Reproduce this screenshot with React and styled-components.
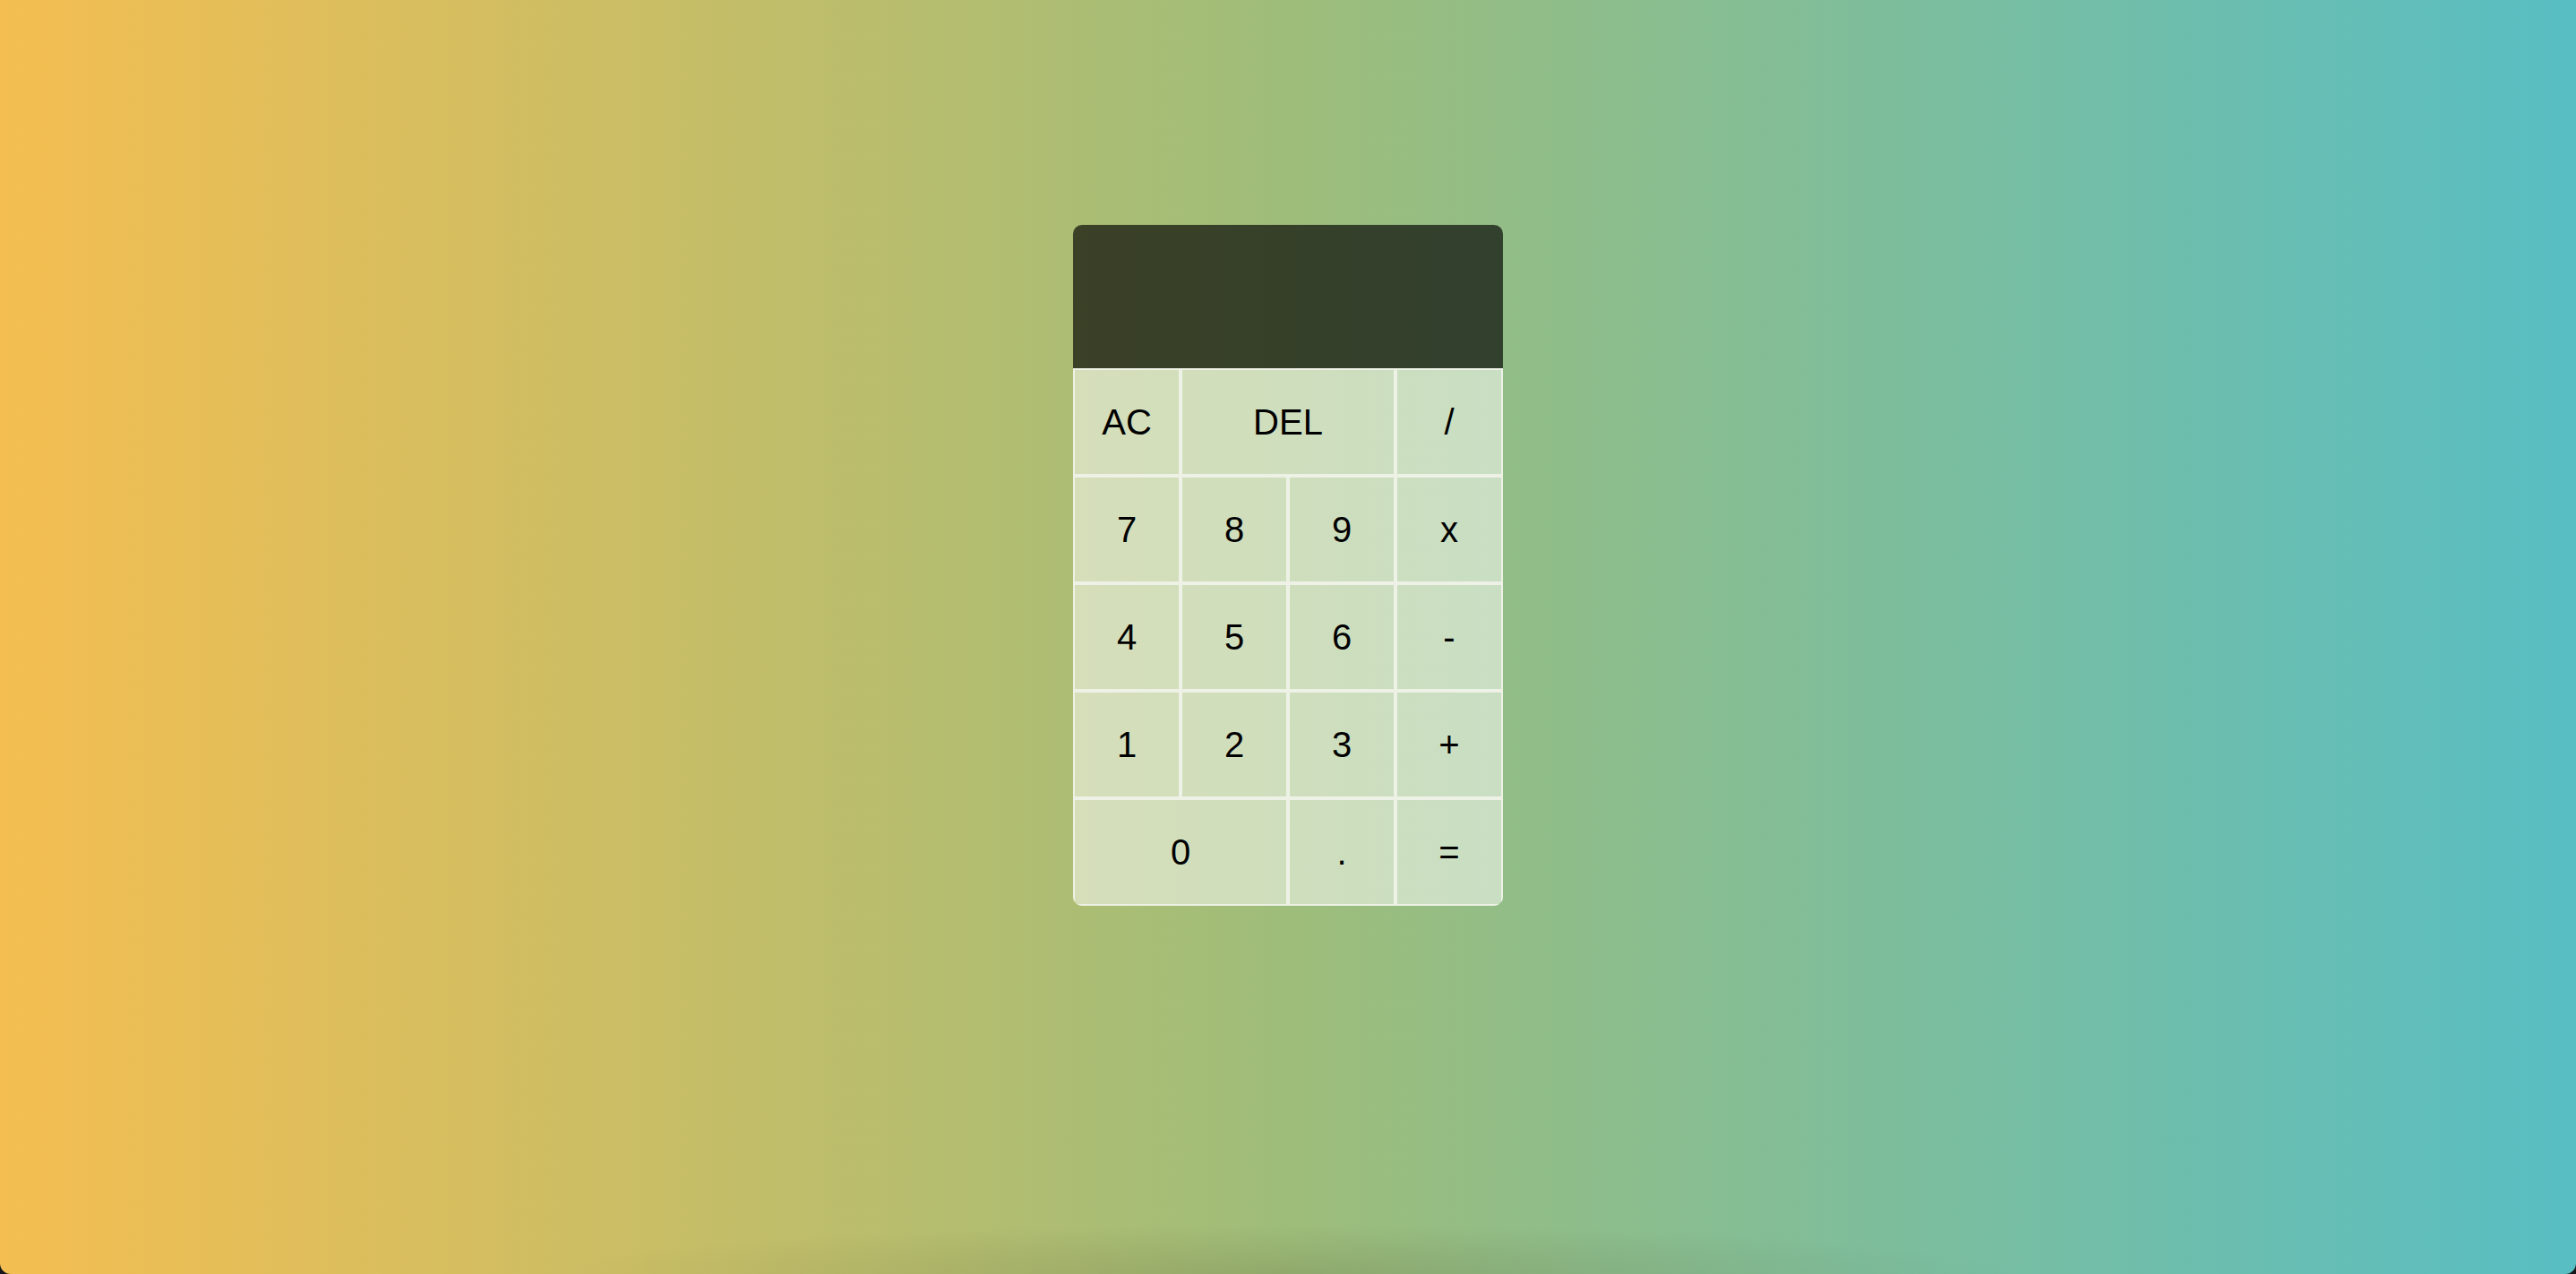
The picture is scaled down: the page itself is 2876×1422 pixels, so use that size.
import styled, { createGlobalStyle } from "styled-components";

const GlobalStyle = createGlobalStyle`
  *, *::before, *::after {
    box-sizing: border-box;
  }

  body {
    margin: 0;
    background: #15171a;
    font-family: "Liberation Sans", Arial, sans-serif;
  }
`;

const Page = styled.div`
  height: 100vh;
  padding-top: 251px;
  border-radius: 0 0 12px 12px;
  overflow: hidden;
  background:
    radial-gradient(ellipse 820px 55px at 50% 100%, rgba(60, 50, 20, 0.14), transparent),
    linear-gradient(to right, #f4be51, #9ebd7a 50%, #58bec3);
  display: flex;
  justify-content: center;
  align-items: flex-start;
`;

const Calculator = styled.div`
  display: grid;
  grid-template-columns: repeat(4, 120px);
  grid-template-rows: 160px repeat(5, 120px);
  border-radius: 10px;
  overflow: hidden;
`;

const Display = styled.div`
  grid-column: 1 / -1;
  background: rgba(0, 0, 0, 0.66);
  color: white;
  display: flex;
  flex-direction: column;
  align-items: flex-end;
  justify-content: space-around;
  padding: 10px;
`;

const Key = styled.button`
  grid-column: span ${(p) => p.$span || 1};
  border: 2px solid #eef2e6;
  background: rgba(255, 255, 255, 0.5);
  font-family: "Liberation Sans", Arial, sans-serif;
  font-size: 40px;
  color: #000;
  cursor: pointer;
  outline: none;
  padding: 0;

  &:hover {
    background: rgba(255, 255, 255, 0.9);
  }
`;

const keys = [
  ["AC", 1],
  ["DEL", 2],
  ["/", 1],
  ["7"],
  ["8"],
  ["9"],
  ["x"],
  ["4"],
  ["5"],
  ["6"],
  ["-"],
  ["1"],
  ["2"],
  ["3"],
  ["+"],
  ["0", 2],
  ["."],
  ["="],
];

export default function App() {
  return (
    <>
      <GlobalStyle />
      <Page>
        <Calculator>
          <Display />
          {keys.map(([label, span]) => (
            <Key key={label} $span={span}>
              {label}
            </Key>
          ))}
        </Calculator>
      </Page>
    </>
  );
}
